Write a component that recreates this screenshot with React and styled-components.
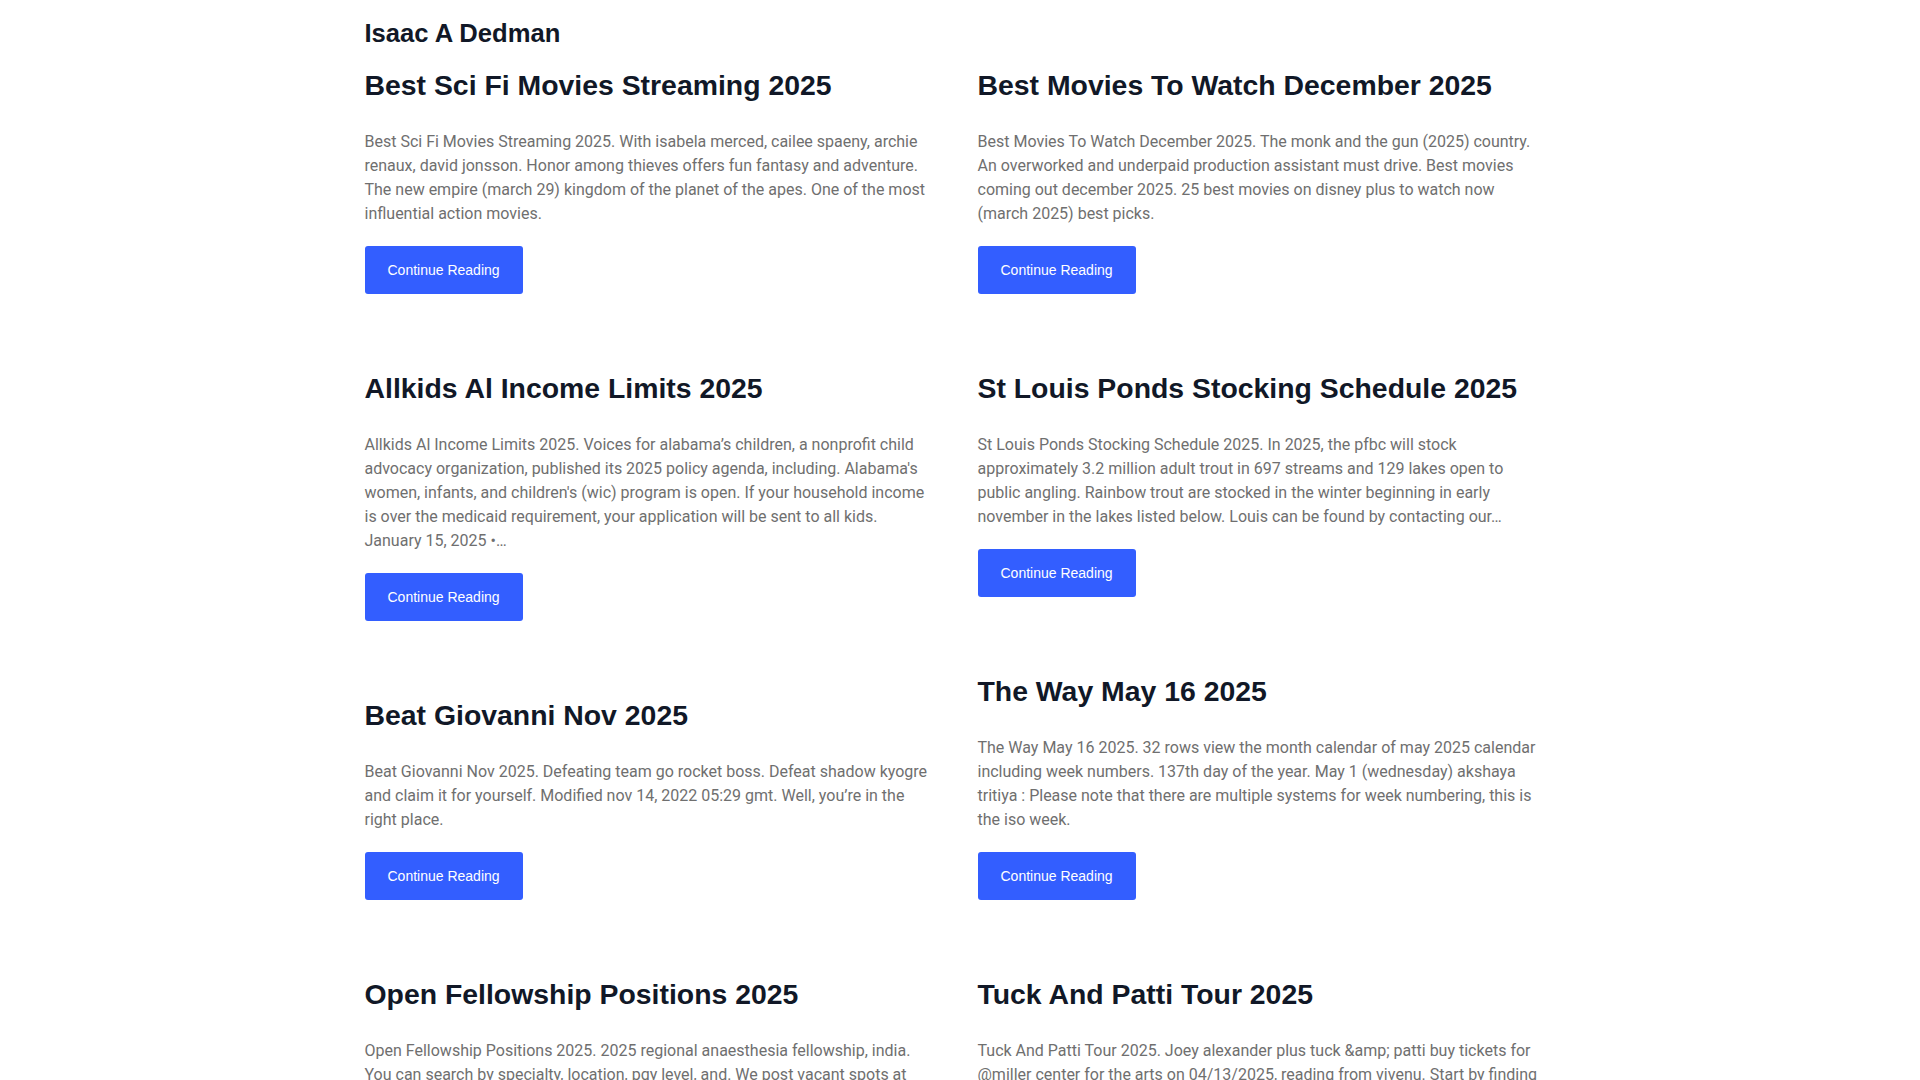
import styled, { createGlobalStyle } from "styled-components";

const GlobalStyle = createGlobalStyle`
  html, body {
    margin: 0;
    padding: 0;
    background: #ffffff;
  }
  body {
    padding-right: 15px;
    font-family: Roboto, "Liberation Sans", Arial, sans-serif;
    -webkit-font-smoothing: antialiased;
  }
  * {
    box-sizing: border-box;
  }
`;

const posts = [
  {
    title: "Best Sci Fi Movies Streaming 2025",
    excerpt:
      "Best Sci Fi Movies Streaming 2025. With isabela merced, cailee spaeny, archie renaux, david jonsson. Honor among thieves offers fun fantasy and adventure. The new empire (march 29) kingdom of the planet of the apes. One of the most influential action movies.",
  },
  {
    title: "Best Movies To Watch December 2025",
    excerpt:
      "Best Movies To Watch December 2025. The monk and the gun (2025) country. An overworked and underpaid production assistant must drive. Best movies coming out december 2025. 25 best movies on disney plus to watch now (march 2025) best picks.",
  },
  {
    title: "Allkids Al Income Limits 2025",
    excerpt:
      "Allkids Al Income Limits 2025. Voices for alabama’s children, a nonprofit child advocacy organization, published its 2025 policy agenda, including. Alabama's women, infants, and children's (wic) program is open. If your household income is over the medicaid requirement, your application will be sent to all kids. January 15, 2025 •…",
  },
  {
    title: "St Louis Ponds Stocking Schedule 2025",
    excerpt:
      "St Louis Ponds Stocking Schedule 2025. In 2025, the pfbc will stock approximately 3.2 million adult trout in 697 streams and 129 lakes open to public angling. Rainbow trout are stocked in the winter beginning in early november in the lakes listed below. Louis can be found by contacting our…",
  },
  {
    title: "Beat Giovanni Nov 2025",
    excerpt:
      "Beat Giovanni Nov 2025. Defeating team go rocket boss. Defeat shadow kyogre and claim it for yourself. Modified nov 14, 2022 05:29 gmt. Well, you’re in the right place.",
  },
  {
    title: "The Way May 16 2025",
    excerpt:
      "The Way May 16 2025. 32 rows view the month calendar of may 2025 calendar including week numbers. 137th day of the year. May 1 (wednesday) akshaya tritiya : Please note that there are multiple systems for week numbering, this is the iso week.",
  },
  {
    title: "Open Fellowship Positions 2025",
    excerpt:
      "Open Fellowship Positions 2025. 2025 regional anaesthesia fellowship, india. You can search by specialty, location, pgy level, and. We post vacant spots at programs across the country as soon as they open up.",
  },
  {
    title: "Tuck And Patti Tour 2025",
    excerpt:
      "Tuck And Patti Tour 2025. Joey alexander plus tuck &amp; patti buy tickets for @miller center for the arts on 04/13/2025, reading from vivenu. Start by finding the show nearest you and grab seats early.",
  },
  {
    title: "Nfl Draft Order 2025 Round 1",
    excerpt:
      "Nfl Draft Order 2025 Round 1. The full order for the first round is set after the regular season. Teams that missed the playoffs pick first, followed by the playoff clubs in order of elimination.",
  },
  {
    title: "Chinese New Year Holiday 2025",
    excerpt:
      "Chinese New Year Holiday 2025. The spring festival falls on january 29, 2025. Offices and factories usually close for a week, and travel peaks in the days before the holiday begins.",
  },
  {
    title: "Best Family Cars 2025 Uk",
    excerpt:
      "Best Family Cars 2025 Uk. Space, safety and running costs matter most when you pick a family car. We rounded up the models that offer the most room for the money this year.",
  },
  {
    title: "Spring Break 2025 Dates Texas",
    excerpt:
      "Spring Break 2025 Dates Texas. Most districts take their break in mid march. Check your district calendar for the exact week, as dates can differ from one county to the next.",
  },
  {
    title: "Ford Maverick Hybrid 2025 Review",
    excerpt:
      "Ford Maverick Hybrid 2025 Review. The compact pickup keeps its frugal hybrid powertrain and adds a few new trims. It remains one of the most affordable trucks on the market.",
  },
  {
    title: "World Cup Qualifiers 2025 Schedule",
    excerpt:
      "World Cup Qualifiers 2025 Schedule. Qualifying matches continue through the year across every confederation. Here is the full list of fixtures, kick off times and venues.",
  },
  {
    title: "Tax Brackets 2025 Married Filing Jointly",
    excerpt:
      "Tax Brackets 2025 Married Filing Jointly. The irs adjusts brackets every year for inflation. Couples filing together will see slightly higher thresholds for each rate.",
  },
  {
    title: "Summer Olympics 2025 Location",
    excerpt:
      "Summer Olympics 2025 Location. There are no summer games in 2025, but several world championships take place during the year. The next summer olympics will be held in los angeles.",
  },
];

const Page = styled.div`
  max-width: 1176px;
  margin: 0 auto;
  padding: 18px 0 40px;
`;

const SiteTitle = styled.h1`
  margin: 0 0 20px;
  font-family: "Liberation Sans", Arial, sans-serif;
  font-size: 25.6px;
  line-height: 1.2;
  font-weight: 700;
  color: #111827;
`;

const Columns = styled.div`
  display: flex;
  align-items: flex-start;
  gap: 50px;
`;

const Column = styled.div`
  flex: 1 1 0;
  min-width: 0;
  display: flex;
  flex-direction: column;
  gap: 77.5px;
`;

const Post = styled.article`
  display: flex;
  flex-direction: column;
  align-items: flex-start;
`;

const PostTitle = styled.h2`
  margin: 0 0 28.5px;
  font-family: "Liberation Sans", Arial, sans-serif;
  font-size: 28.4px;
  line-height: 33px;
  font-weight: 700;
  color: #111827;
`;

const Excerpt = styled.p`
  margin: 0 0 20px;
  font-family: Roboto, "Liberation Sans", sans-serif;
  font-size: 16px;
  line-height: 24px;
  color: #6f6f6f;
`;

const ReadButton = styled.a`
  display: inline-flex;
  align-items: center;
  justify-content: center;
  height: 48px;
  padding: 0 23px;
  border-radius: 3px;
  background: #335eff;
  color: #ffffff;
  font-family: "Liberation Sans", Arial, sans-serif;
  font-size: 14px;
  text-decoration: none;
  cursor: pointer;
`;

const PostCard = ({ post }) => (
  <Post>
    <PostTitle>{post.title}</PostTitle>
    <Excerpt>{post.excerpt}</Excerpt>
    <ReadButton href="#">Continue Reading</ReadButton>
  </Post>
);

const App = () => {
  const left = posts.filter((_, i) => i % 2 === 0);
  const right = posts.filter((_, i) => i % 2 === 1);

  return (
    <>
      <GlobalStyle />
      <Page>
        <SiteTitle>Isaac A Dedman</SiteTitle>
        <Columns>
          <Column>
            {left.map((post) => (
              <PostCard key={post.title} post={post} />
            ))}
          </Column>
          <Column>
            {right.map((post) => (
              <PostCard key={post.title} post={post} />
            ))}
          </Column>
        </Columns>
      </Page>
    </>
  );
};

export default App;
